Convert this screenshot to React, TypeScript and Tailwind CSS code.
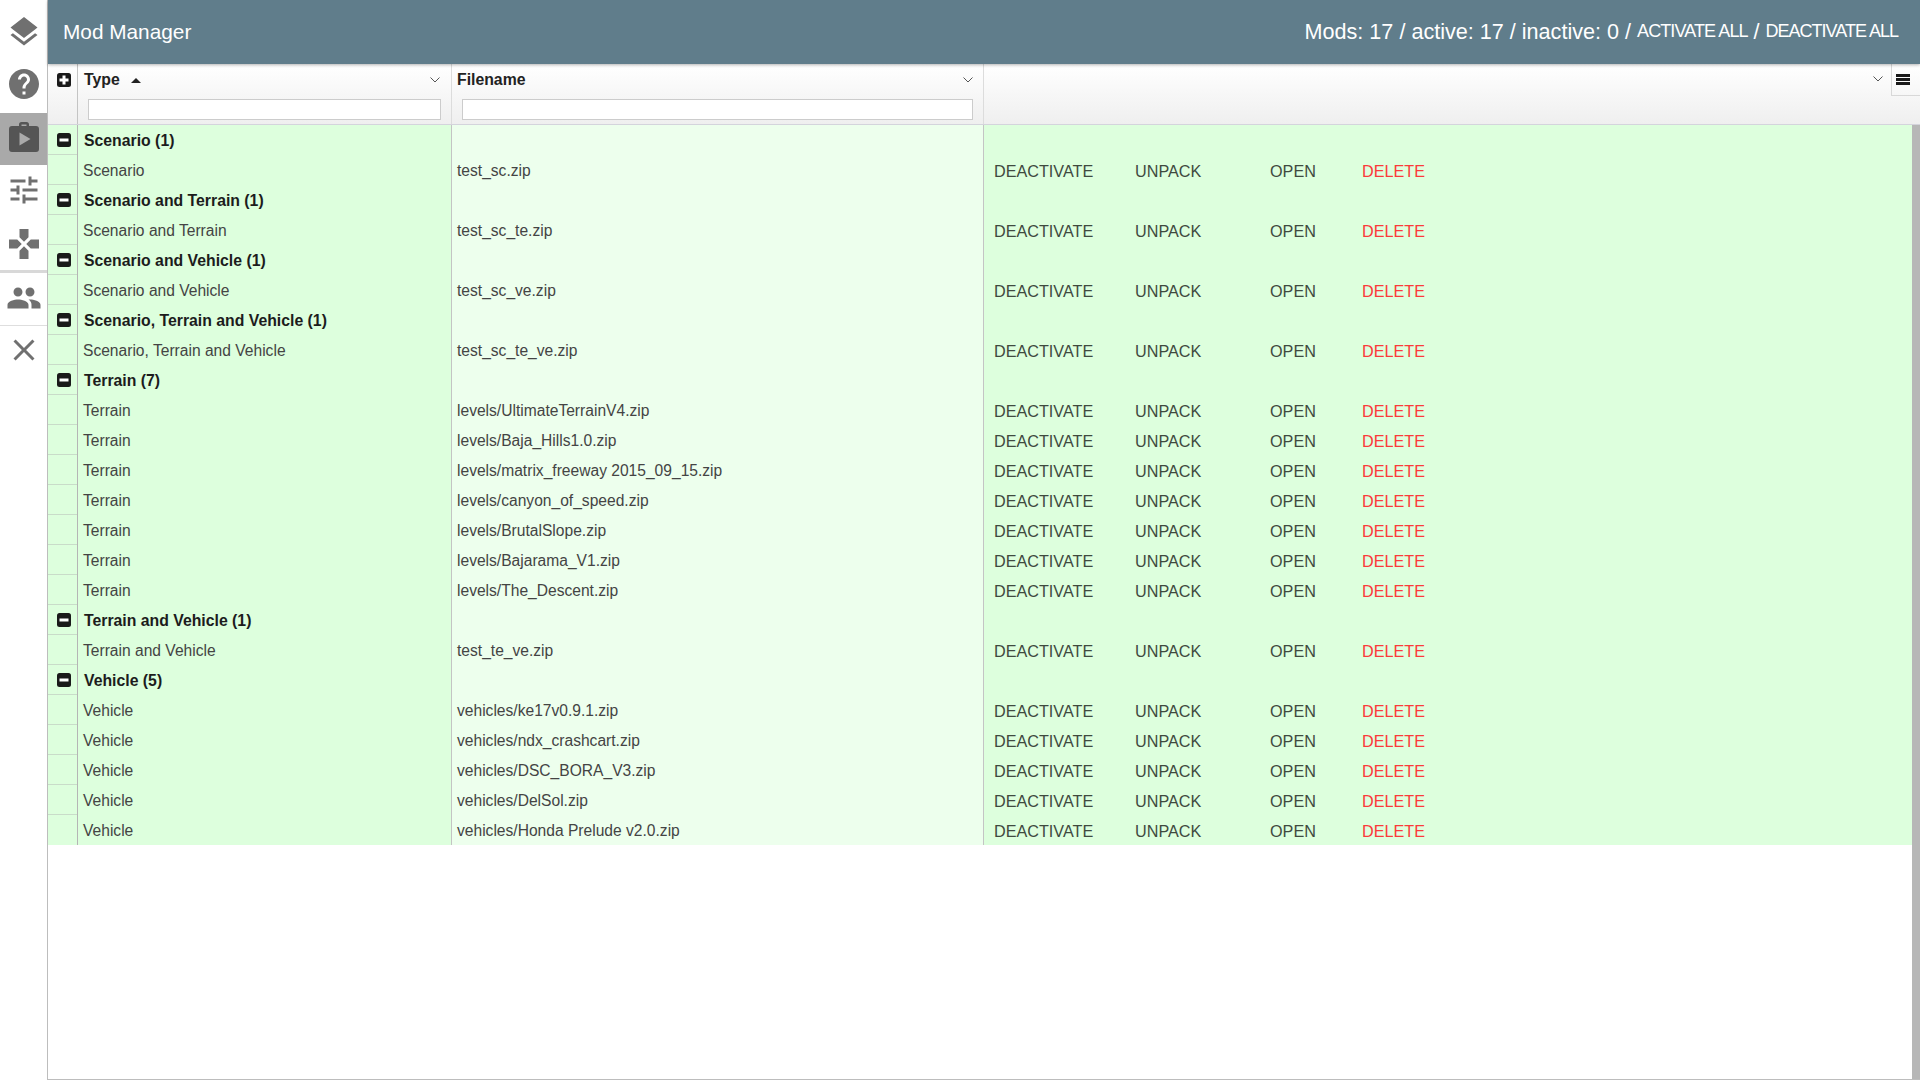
import React from "react";
import { MdLayers, MdHelp, MdTune, MdGamepad, MdPeople, MdClose } from "react-icons/md";

type Row = { group?: string; type?: string; file?: string };

const rows: Row[] = [
  { group: "Scenario (1)" },
  { type: "Scenario", file: "test_sc.zip" },
  { group: "Scenario and Terrain (1)" },
  { type: "Scenario and Terrain", file: "test_sc_te.zip" },
  { group: "Scenario and Vehicle (1)" },
  { type: "Scenario and Vehicle", file: "test_sc_ve.zip" },
  { group: "Scenario, Terrain and Vehicle (1)" },
  { type: "Scenario, Terrain and Vehicle", file: "test_sc_te_ve.zip" },
  { group: "Terrain (7)" },
  { type: "Terrain", file: "levels/UltimateTerrainV4.zip" },
  { type: "Terrain", file: "levels/Baja_Hills1.0.zip" },
  { type: "Terrain", file: "levels/matrix_freeway 2015_09_15.zip" },
  { type: "Terrain", file: "levels/canyon_of_speed.zip" },
  { type: "Terrain", file: "levels/BrutalSlope.zip" },
  { type: "Terrain", file: "levels/Bajarama_V1.zip" },
  { type: "Terrain", file: "levels/The_Descent.zip" },
  { group: "Terrain and Vehicle (1)" },
  { type: "Terrain and Vehicle", file: "test_te_ve.zip" },
  { group: "Vehicle (5)" },
  { type: "Vehicle", file: "vehicles/ke17v0.9.1.zip" },
  { type: "Vehicle", file: "vehicles/ndx_crashcart.zip" },
  { type: "Vehicle", file: "vehicles/DSC_BORA_V3.zip" },
  { type: "Vehicle", file: "vehicles/DelSol.zip" },
  { type: "Vehicle", file: "vehicles/Honda Prelude v2.0.zip" },
];

function SquareIcon({ plus }: { plus?: boolean }) {
  return (
    <svg width="14" height="14" viewBox="0 0 14 14">
      <rect x="0" y="0" width="14" height="14" rx="2.5" fill="#1a1a1a" />
      {plus ? (
        <path d="M5.5 2.5h3v3h3v3h-3v3h-3v-3h-3v-3h3z" fill="#fff" />
      ) : (
        <rect x="2.5" y="5.5" width="9" height="3" fill="#fff" />
      )}
    </svg>
  );
}

function Chevron({ className }: { className?: string }) {
  return (
    <svg width="10" height="6" viewBox="0 0 10 6" className={className}>
      <path d="M0.5 0.5 5 5 9.5 0.5" fill="none" stroke="#555" strokeWidth="1" />
    </svg>
  );
}

function Hamburger() {
  return (
    <svg width="14" height="11" viewBox="0 0 14 11">
      <path d="M0 0h14v3H0zM0 4h14v3H0zM0 8h14v3H0z" fill="#1a1a1a" />
    </svg>
  );
}

function WorkPlay() {
  return (
    <svg width="36" height="36" viewBox="0 0 36 36">
      <path
        d="M13 7V5.5A2.5 2.5 0 0 1 15.5 3h5A2.5 2.5 0 0 1 23 5.5V7h7a3 3 0 0 1 3 3v20a3 3 0 0 1-3 3H6a3 3 0 0 1-3-3V10a3 3 0 0 1 3-3zm2.5 0h5V5.5h-5z"
        fill="#555"
        fillRule="evenodd"
      />
      <path d="M13.5 13.5v13l11-6.5z" fill="#aaa" />
    </svg>
  );
}

function DataRow({ row, last }: { row: Row; last: boolean }) {
  return (
    <div className="flex h-[30px]">
      <div className={`flex w-[29px] items-center justify-center bg-[#ddffdd] pl-[3px] ${last ? "" : "border-b border-[#c9dcc9]"}`}>
        {row.group && <SquareIcon />}
      </div>
      <div className="flex w-[375px] items-center border-x border-[#b5b5b5] border-r-[#c4c4c4] bg-[#ddffdd] pl-[5px] text-[15.6px] leading-[22px] text-[#444]">
        {row.group ? <span className="pt-px pl-px text-[15.8px] font-bold text-[#1c1c1c]">{row.group}</span> : <span className="pt-px">{row.type}</span>}
      </div>
      <div className="flex w-[532px] items-center border-r border-[#c4c4c4] bg-[#edffed] pl-[5px] text-[15.6px] leading-[22px] text-[#444]">
        <span className="pt-px">{row.file}</span>
      </div>
      <div className="flex flex-1 items-center bg-[#ddffdd] pt-[2px] pl-[10px] text-[16.2px] leading-[22px] text-[#3f4a3f]">
        {!row.group && (
          <>
            <span className="w-[141px]">DEACTIVATE</span>
            <span className="w-[135px]">UNPACK</span>
            <span className="w-[92px]">OPEN</span>
            <span className="text-[#fb3a3a]">DELETE</span>
          </>
        )}
      </div>
    </div>
  );
}

export default function App() {
  return (
    <div className="flex h-screen w-full overflow-hidden bg-white font-['Liberation_Sans',sans-serif]">
      <aside className="flex w-[47px] shrink-0 flex-col bg-white text-[#707070]">
        <div className="flex h-[58px] items-center justify-center pt-[6px]"><MdLayers size={36} /></div>
        <div className="flex h-[55px] items-center justify-center pb-[3px]"><MdHelp size={36} /></div>
        <div className="flex h-[52px] items-center justify-center bg-[#a9a9a9] pb-[5px]"><WorkPlay /></div>
        <div className="flex h-[52px] items-center justify-center pb-[2px]"><MdTune size={36} /></div>
        <div className="flex h-[56px] items-center justify-center border-b-[3px] border-[#d8d8d8]"><MdGamepad size={36} /></div>
        <div className="flex h-[53px] items-center justify-center border-b border-[#dedede] pb-[3px]"><MdPeople size={36} /></div>
        <div className="flex h-[48px] items-center justify-center"><MdClose size={36} /></div>
      </aside>
      <main className="flex min-w-0 flex-1 flex-col border-b border-l border-[#bdbdbd]">
        <header className="z-10 flex h-[64px] shrink-0 items-center justify-between bg-[#607D8B] pr-[22px] pl-[15px] text-white shadow-[0_1px_3px_rgba(0,0,0,0.3)]">
          <span className="text-[20.8px]">Mod Manager</span>
          <div className="flex items-center text-[21.6px]">
            <span>Mods: 17 / active: 17 / inactive: 0 /&nbsp;</span>
            <span className="text-[18px] tracking-[-0.9px]">ACTIVATE ALL</span>
            <span>&nbsp;/&nbsp;</span>
            <span className="text-[18px] tracking-[-1px]">DEACTIVATE ALL</span>
          </div>
        </header>
        <div className="flex h-[61px] shrink-0 border-b border-[#d4d4dc] bg-gradient-to-b from-white to-[#efefef]">
          <div className="flex w-[29px] justify-center pt-[9px] pl-[3px]">
            <SquareIcon plus />
          </div>
          <div className="w-[375px] border-x border-[#c4c4c4] border-r-[#dcdcdc] pt-[5px] pr-[9px] pl-[5px]">
            <div className="flex items-center text-[15.8px] leading-[22px] font-bold text-[#222]">
              <span className="pl-px">Type</span>
              <span className="ml-[11px] h-0 w-0 border-x-[5px] border-b-[5px] border-x-transparent border-b-[#222]" />
              <Chevron className="mr-[2px] ml-auto" />
            </div>
            <input className="mt-[8px] ml-[5px] block h-[21px] w-[353px] border border-[#ccc] bg-white" />
          </div>
          <div className="w-[532px] border-r border-[#dcdcdc] pt-[5px] pr-[9px] pl-[5px]">
            <div className="flex items-center text-[15.8px] leading-[22px] font-bold text-[#222]">
              <span>Filename</span>
              <Chevron className="mr-[1px] ml-auto" />
            </div>
            <input className="mt-[8px] ml-[5px] block h-[21px] w-[511px] border border-[#ccc] bg-white" />
          </div>
          <div className="flex flex-1 items-start justify-end">
            <Chevron className="mt-[12px] mr-[8px]" />
            <div className="flex h-[32px] w-[29px] items-center justify-start border-b border-l border-[#d8d8d8] pl-[4px]">
              <Hamburger />
            </div>
          </div>
        </div>
        <div className="flex min-h-0 flex-1">
          <div className="min-w-0 flex-1">
            {rows.map((r, i) => (
              <DataRow key={i} row={r} last={i === rows.length - 1} />
            ))}
          </div>
          <div className="w-[8px] shrink-0 bg-[#b7b7b7]" />
        </div>
      </main>
    </div>
  );
}
